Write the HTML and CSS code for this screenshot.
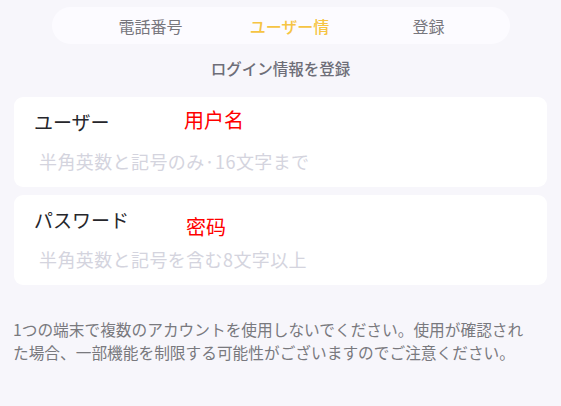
FILE: index.html
```html
<!DOCTYPE html>
<html lang="ja">
<head>
<meta charset="utf-8">
<link rel="stylesheet" href="styles.css">
</head>
<body>
<div class="page">
  <nav class="tabs">
    <span class="tab">電話番号</span>
    <span class="tab active">ユーザー情</span>
    <span class="tab">登録</span>
  </nav>
  <h2 class="title">ログイン情報を登録</h2>
  <div class="cards">
    <div class="card">
      <div class="label">ユーザー</div>
      <div class="placeholder">半角英数と記号のみ·16文字まで</div>
      <span class="note note-user" lang="zh-CN">用户名</span>
    </div>
    <div class="card">
      <div class="label">パスワード</div>
      <div class="placeholder">半角英数と記号を含む8文字以上</div>
      <span class="note note-pass" lang="zh-CN">密码</span>
    </div>
  </div>
  <p class="footer">1つの端末で複数のアカウントを使用しないでください。使用が確認された場合、一部機能を制限する可能性がございますのでご注意ください。</p>
</div>
</body>
</html>
```

FILE: styles.css
```css
html, body {
  margin: 0;
  padding: 0;
  background: #f7f6fb;
}
body {
  font-family: "Noto Sans CJK JP", "Noto Sans", sans-serif;
  width: 561px;
  height: 406px;
  overflow: hidden;
}
.page {
  padding-top: 7px;
}
.tabs {
  margin: 0 51px 0 52px;
  height: 37px;
  border-radius: 19px;
  background: #fcfbff;
  display: grid;
  grid-template-columns: 139px 139px 139px;
  padding-left: 29px;
  align-items: center;
  box-sizing: border-box;
}
.tab {
  text-align: center;
  font-size: 16px;
  line-height: 22px;
  color: #77767d;
}
.tab.active {
  color: #f6c443;
  font-weight: 500;
}
.title {
  margin: 13px 0 0;
  text-align: center;
  font-size: 15.5px;
  line-height: 22px;
  font-weight: 500;
  color: #6e6e78;
}
.cards {
  margin: 18px 14px 0;
  display: flex;
  flex-direction: column;
  gap: 8px;
}
.card {
  position: relative;
  background: #ffffff;
  border-radius: 9px;
  height: 90px;
  box-sizing: border-box;
  padding: 13px 20px 0;
}
.label {
  font-size: 19px;
  line-height: 24px;
  color: #26262b;
  font-weight: 400;
}
.placeholder {
  margin: 15px 0 0 5px;
  font-size: 18px;
  letter-spacing: 0.4px;
  line-height: 24px;
  color: #d4d4de;
}
.note {
  position: absolute;
  font-family: "Noto Sans CJK SC", sans-serif;
  color: #ff0000;
  font-size: 20px;
  line-height: 26px;
}
.note-user {
  left: 170px;
  top: 10px;
}
.note-pass {
  left: 172px;
  top: 19px;
}
.footer {
  margin: 33px 30px 0 13px;
  font-size: 15.7px;
  line-height: 23px;
  color: #79797e;
}
```
